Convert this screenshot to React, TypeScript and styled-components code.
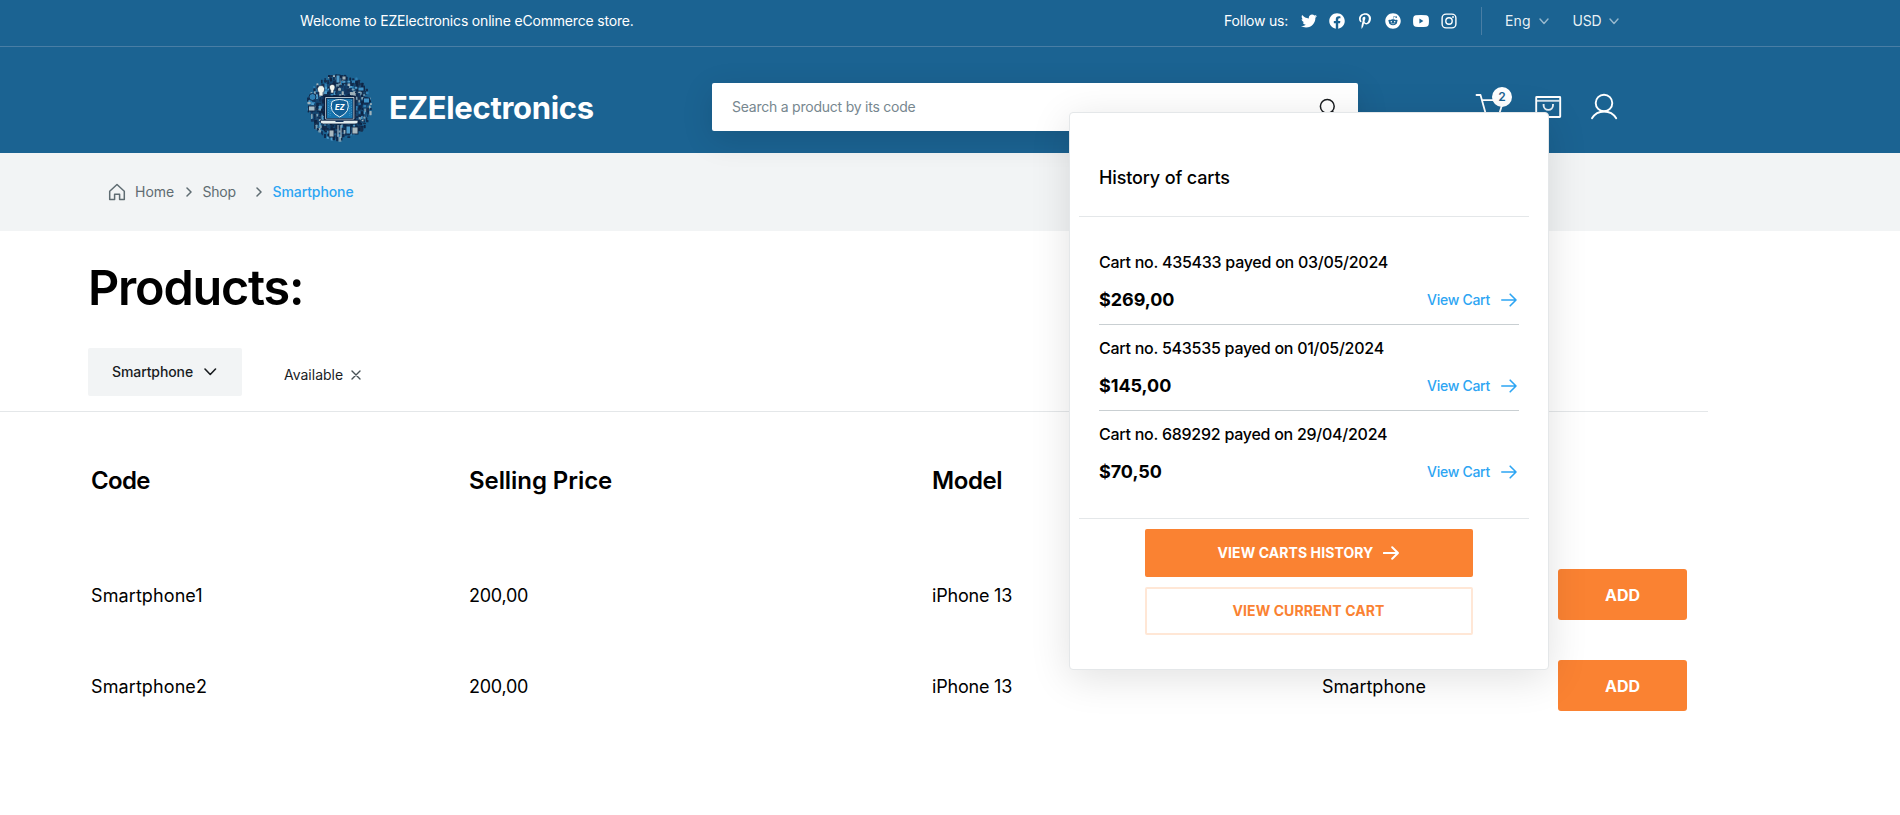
import React from 'react';
import styled, { createGlobalStyle } from 'styled-components';
import { FaTwitter, FaFacebook, FaPinterestP, FaReddit } from 'react-icons/fa';

const GlobalStyle = createGlobalStyle`
  *, *::before, *::after { box-sizing: border-box; }
  body {
    margin: 0;
    background: #fff;
    color: #000;
    font-family: Inter, 'Liberation Sans', sans-serif;
    overflow-x: hidden;
  }
  svg { display: block; flex: none; }
`;

const Page = styled.div`
  position: relative;
  width: 1900px;
  min-height: 815px;
  overflow: hidden;
`;

/* ---------- header ---------- */

const TopBar = styled.div`
  display: flex;
  align-items: center;
  justify-content: space-between;
  height: 47px;
  padding: 0 281px 4px 300px;
  background: #1b6392;
  border-bottom: 1px solid #497ea5;
  color: #fff;
  font-size: 14px;
  line-height: 20px;
  white-space: nowrap;
`;

const Welcome = styled.span`
  letter-spacing: -0.18px;
`;

const TopRight = styled.div`
  display: flex;
  align-items: center;
`;

const FollowLabel = styled.span`
  width: 77px;
  letter-spacing: -0.2px;
`;

const Socials = styled.div`
  display: flex;
  align-items: center;
  gap: 12px;
`;

const Separator = styled.span`
  width: 1px;
  height: 28px;
  margin: 0 23px 0 24px;
  background: #497ea5;
`;

const Picker = styled.div<{ $width: number; $gapLeft?: number; $spacing?: number }>`
  display: flex;
  align-items: center;
  justify-content: space-between;
  width: ${(p) => p.$width}px;
  margin-left: ${(p) => p.$gapLeft ?? 0}px;
  letter-spacing: ${(p) => p.$spacing ?? 0}px;
  color: rgba(255, 255, 255, 0.92);
`;

const MainBar = styled.header`
  display: flex;
  align-items: center;
  height: 106px;
  padding: 14px 280px 0 305px;
  background: #1b6392;
`;

const Brand = styled.div`
  display: flex;
  align-items: center;
  gap: 14px;
  width: 407px;
`;

const BrandName = styled.span`
  padding-top: 2px;
  color: #fff;
  font-size: 31px;
  font-weight: 700;
  line-height: 40px;
  letter-spacing: -0.32px;
`;

const SearchBox = styled.div`
  display: flex;
  align-items: center;
  justify-content: space-between;
  width: 646px;
  height: 48px;
  padding: 0 20px;
  border-radius: 2px;
  background: #fff;
  box-shadow: 0 8px 32px rgba(0, 0, 0, 0.12);
  color: #77878f;
  font-size: 14px;
  line-height: 20px;
  letter-spacing: -0.23px;
`;

const Actions = styled.nav`
  display: flex;
  align-items: center;
  margin-left: auto;
`;

const ActionItem = styled.div<{ $gapLeft?: number }>`
  position: relative;
  margin-left: ${(p) => p.$gapLeft ?? 0}px;
`;

const Badge = styled.span`
  position: absolute;
  top: -4px;
  left: 18px;
  width: 20px;
  height: 20px;
  border-radius: 50%;
  background: #fff;
  color: #1b6392;
  font-size: 12px;
  font-weight: 600;
  line-height: 20px;
  text-align: center;
`;

/* ---------- breadcrumb ---------- */

const Breadcrumb = styled.nav`
  display: flex;
  align-items: center;
  height: 78px;
  padding-left: 108px;
  background: #f2f4f5;
  font-size: 14px;
  line-height: 20px;
`;

const HomeIconBox = styled.span`
  width: 27px;
`;

const Crumb = styled.span<{ $width?: number; $spacing: number; $active?: boolean }>`
  width: ${(p) => (p.$width ? `${p.$width}px` : 'auto')};
  letter-spacing: ${(p) => p.$spacing}px;
  color: ${(p) => (p.$active ? '#2da5f3' : '#5f6c72')};
  font-weight: ${(p) => (p.$active ? 500 : 400)};
`;

const CrumbArrow = styled.span`
  width: 17px;
`;

/* ---------- products ---------- */

const Title = styled.h1`
  margin: 0;
  padding: 27px 0 0 88px;
  font-size: 48.5px;
  font-weight: 600;
  line-height: 60px;
  letter-spacing: -1.2px;
`;

const Filters = styled.div`
  display: flex;
  align-items: center;
  width: 1708px;
  height: 94px;
  padding: 30px 0 15px 88px;
  border-bottom: 1px solid #e4e7e9;
  color: #191c1f;
  font-size: 14px;
  line-height: 20px;
`;

const CategorySelect = styled.div`
  display: flex;
  align-items: center;
  gap: 11px;
  width: 154px;
  height: 48px;
  padding-left: 24px;
  border-radius: 2px;
  background: #f2f4f5;
  font-weight: 500;
  letter-spacing: -0.1px;
`;

const FilterTag = styled.div`
  display: flex;
  align-items: center;
  gap: 8px;
  margin-left: 42px;
  padding-top: 5px;
`;

const Table = styled.div`
  padding-left: 91px;
`;

const Row = styled.div`
  display: grid;
  grid-template-columns: 378px 463px 390px 236px 129px;
  align-items: center;
  height: 91px;
`;

const HeadRow = styled(Row)`
  height: 137px;
`;

const HeadCell = styled.span<{ $spacing?: number }>`
  padding-top: 1px;
  font-size: 24px;
  font-weight: 600;
  line-height: 32px;
  letter-spacing: ${(p) => p.$spacing ?? 0}px;
`;

const Cell = styled.span<{ $spacing?: number }>`
  padding-top: 2px;
  font-size: 18px;
  line-height: 24px;
  letter-spacing: ${(p) => p.$spacing ?? 0}px;
`;

const AddButton = styled.button`
  height: 51px;
  padding: 0;
  border: 0;
  border-radius: 3px;
  background: #fa8232;
  color: #fff;
  font: 700 16px/24px Inter, sans-serif;
`;

/* ---------- cart history popup ---------- */

const Popup = styled.section`
  position: absolute;
  top: 112px;
  left: 1069px;
  width: 480px;
  height: 558px;
  border: 1px solid #e4e7e9;
  border-radius: 4px;
  background: #fff;
  box-shadow: 0 8px 40px rgba(0, 0, 0, 0.12);
`;

const PopupTitle = styled.h2`
  width: 450px;
  height: 104px;
  margin: 0 0 0 9px;
  padding: 53px 0 0 20px;
  border-bottom: 1px solid #e4e7e9;
  font-size: 18px;
  font-weight: 500;
  line-height: 24px;
  letter-spacing: -0.14px;
`;

const CartList = styled.ul`
  width: 420px;
  margin: 22px 0 0 29px;
  padding: 0;
  list-style: none;
`;

const CartEntry = styled.li`
  display: flex;
  flex-direction: column;
  gap: 14px;
  height: 86px;
  padding-top: 10.5px;
  border-bottom: 1px solid #c9cfd2;

  &:last-child {
    border-bottom-color: transparent;
  }
`;

const CartLabel = styled.span`
  font-size: 16px;
  font-weight: 500;
  line-height: 24px;
  letter-spacing: -0.26px;
`;

const CartFooter = styled.div`
  display: flex;
  align-items: center;
  justify-content: space-between;
`;

const CartTotal = styled.span`
  font-size: 18px;
  font-weight: 700;
  line-height: 24px;
  letter-spacing: -0.05px;
`;

const CartLink = styled.a`
  display: flex;
  align-items: center;
  gap: 11px;
  padding-right: 2px;
  color: #2da5f3;
  font-size: 14px;
  font-weight: 500;
  line-height: 20px;
  letter-spacing: -0.27px;
`;

const PopupActions = styled.div`
  display: flex;
  flex-direction: column;
  gap: 10px;
  width: 450px;
  margin: 21px 0 0 9px;
  padding: 10px 56px 0 66px;
  border-top: 1px solid #e4e7e9;
`;

const PopupButton = styled.button<{ $outline?: boolean }>`
  display: flex;
  align-items: center;
  justify-content: center;
  gap: 10px;
  height: 48px;
  padding: 0 1px 0 0;
  border: 2px solid ${(p) => (p.$outline ? '#ffe7d6' : '#fa8232')};
  border-radius: 2px;
  background: ${(p) => (p.$outline ? '#fff' : '#fa8232')};
  color: ${(p) => (p.$outline ? '#fa8232' : '#fff')};
  font: 700 14px/20px Inter, sans-serif;
  letter-spacing: 0.08px;
`;

/* ---------- icons ---------- */

function Chevron({ width = 8, height = 5, stroke = 1.4, opacity = 1 }) {
  return (
    <svg width={width + 2} height={height + 2} fill="none" stroke="currentColor" strokeWidth={stroke} opacity={opacity}>
      <path d={`M1 1l${width / 2} ${height - 0.5}L${width + 1} 1`} strokeLinecap="round" strokeLinejoin="round" />
    </svg>
  );
}

function RightChevron() {
  return (
    <svg width="6" height="10" fill="none" stroke="#5f6c72" strokeWidth="1.5" strokeLinecap="round" strokeLinejoin="round">
      <path d="M1 1l4 4-4 4" />
    </svg>
  );
}

function Arrow({ stroke = 1.6 }) {
  return (
    <svg width="16" height="14" fill="none" stroke="currentColor" strokeWidth={stroke} strokeLinecap="round" strokeLinejoin="round">
      <path d="M.8 7h14.2M9.2 1.200L15 7l-5.800 5.800" />
    </svg>
  );
}

function YoutubeIcon() {
  return (
    <svg width="16" height="16" viewBox="0 0 16 16">
      <path
        fill="currentColor"
        fillRule="evenodd"
        d="M2.600 2.200Q8 1.600 13.400 2.200Q15.400 2.400 15.700 4.400Q16.200 8 15.700 11.600Q15.400 13.600 13.400 13.800Q8 14.400 2.600 13.800Q.6 13.600.3 11.600Q-.2 8 .3 4.400Q.6 2.400 2.600 2.200ZM6.400 5.600V10.400L10.400 8Z"
      />
    </svg>
  );
}

function InstagramIcon() {
  return (
    <svg width="16" height="16" viewBox="0 0 16 16" fill="none" stroke="currentColor" strokeWidth="1.400">
      <rect x="1.100" y="1.100" width="13.800" height="13.800" rx="4" />
      <circle cx="8" cy="8" r="3.200" />
      <circle cx="12" cy="4" r=".95" fill="currentColor" stroke="none" />
    </svg>
  );
}

function SearchIcon() {
  return (
    <svg width="20" height="20" fill="none" stroke="#191c1f" strokeWidth="1.500" strokeLinecap="round">
      <circle cx="9.300" cy="9.300" r="6.900" />
      <path d="M14.200 14.200L18 18" />
    </svg>
  );
}

function CartIcon() {
  return (
    <svg width="32" height="32" fill="none" stroke="#fff" strokeWidth="1.800" strokeLinecap="round" strokeLinejoin="round">
      <path d="M2.500 4H6.500L11.500 22H25.500L29.500 9.200H8" />
      <circle cx="12.500" cy="27" r="1.500" />
      <circle cx="24.500" cy="27" r="1.500" />
    </svg>
  );
}

function BagIcon() {
  return (
    <svg width="32" height="32" fill="none" stroke="#fff" strokeWidth="1.900">
      <rect x="4.200" y="6" width="24" height="20" rx=".5" />
      <path d="M5 9.800H27.500" opacity=".8" />
      <path d="M11.600 13v1.200a4.700 4.700 0 0 0 9.400 0V13" opacity=".9" />
    </svg>
  );
}

function UserIcon() {
  return (
    <svg width="32" height="32" fill="none" stroke="#fff" strokeWidth="1.900" strokeLinecap="round">
      <circle cx="16" cy="12" r="8.300" />
      <path d="M4 27.300A14.100 14.100 0 0 1 28.200 27.300" />
    </svg>
  );
}

function HouseIcon() {
  return (
    <svg width="18" height="18" fill="none" stroke="#5f6c72" strokeWidth="1.500" strokeLinejoin="round">
      <path d="M1.700 16.500V8.200L9 1.500L16.300 8.200V16.500H11.600V11.300H6.600V16.500Z" />
    </svg>
  );
}

function CloseIcon() {
  return (
    <svg width="10" height="10" fill="none" stroke="#475156" strokeWidth="1.400" strokeLinecap="round">
      <path d="M1 1l8 8M9 1L1 9" />
    </svg>
  );
}

type Part = [number, number, number, number, string];

/* Small gadgets packed in a disc around the laptop. */
const gadgets: Part[] = (() => {
  const shades = ['#102c50', '#0f2748', '#14365f', '#4f9ccb', '#7d9fb2', '#17304f', '#9fb2bb', '#0e2444', '#2f7fb3', '#122b4c'];
  const parts: Part[] = [];
  let seed = 29;
  const next = () => {
    seed = (seed * 1103515245 + 12345) % 2147483648;
    return seed / 2147483648;
  };
  for (let y = 2; y < 70; y += 2.800) {
    for (let x = 2; x < 68; x += 2.800) {
      const px = x + next() * 1.500;
      const py = y + next() * 1.500;
      const w = 1.200 + next() * 1.900;
      const h = 1.400 + next() * 3.600;
      const shade = shades[Math.floor(next() * shades.length)];
      const inDisc = Math.hypot(px + w / 2 - 34.500, py + h / 2 - 35.500) < 32.500;
      if (inDisc && next() > 0.080) parts.push([px, py, w, h, shade]);
    }
  }
  return parts;
})();

function Logo() {
  return (
    <svg width="70" height="70" viewBox="0 0 70 70">
      <circle cx="34.500" cy="35.500" r="28" fill="#12335a" opacity=".6" />
      {gadgets.map(([x, y, w, h, fill], i) => (
        <rect key={i} x={x} y={y} width={w} height={h} rx=".4" fill={fill} />
      ))}
      <g stroke="#0e2444" strokeWidth=".9">
        <rect x="31" y="3" width="4" height="8" fill="#4f9ccb" />
        <rect x="37" y="4" width="4" height="4" fill="#9fb2bb" />
        <rect x="53" y="15" width="6" height="4" fill="#3f93c8" />
        <rect x="58.500" y="26" width="6" height="5" fill="#3f93c8" />
        <rect x="3.500" y="34" width="6.500" height="5" fill="#a9bec8" />
        <rect x="41" y="54" width="4.500" height="8" fill="#4f9ccb" />
        <rect x="47" y="55" width="6" height="7" fill="#a9b9c0" />
        <rect x="24" y="58" width="5" height="7" fill="#a9b9c0" />
        <circle cx="7.500" cy="25" r="3.500" fill="#2f7fb3" />
        <path d="M33 53V65M36 53V66" stroke="#c9d5da" />
      </g>
      <g fill="#f1f5ee" stroke="#0e2444" strokeWidth=".6">
        <path d="M12.500 18a3.600 3.600 0 1 1 7 0q-.3 1.600-1.500 2.600V24h-4V20.600q-1.200-1-1.500-2.600Z" />
        <path d="M24.500 16a2.800 2.800 0 1 1 5.400 0q-.3 1.400-1.200 2.200V21h-3V18.200q-.9-.8-1.200-2.200Z" />
      </g>
      <rect x="18.800" y="23.500" width="32" height="25" rx="1.600" fill="#0b1e3e" />
      <rect x="20.300" y="25" width="29" height="22.500" rx=".8" fill="#d8e6ec" />
      <rect x="21.100" y="25.800" width="27.400" height="21" fill="#0b1e3e" />
      <rect x="22" y="26.700" width="25.600" height="19.500" fill="#1673ad" />
      <path d="M23.500 28V45M25.200 29V44M44.700 29V44M46.400 28V45" stroke="#69b5de" strokeWidth=".7" strokeDasharray=".8 1.600" />
      <path d="M27 29.500Q34.500 25.500 42.500 29.500Q46 40 34.700 45Q23.500 40 27 29.500Z" fill="#125f96" stroke="#e9f3f7" strokeWidth="1" />
      <text x="34.800" y="37.800" textAnchor="middle" fontFamily="Inter, sans-serif" fontSize="7.500" fontWeight="800" fontStyle="italic" fill="#fff">
        EZ
      </text>
      <path d="M15.500 48.300H53V50.500Q52 52 50 52H18.500Q16.500 52 15.500 50.500Z" fill="#e4edf0" stroke="#0b1e3e" strokeWidth=".8" />
      <path d="M30.500 48.600H38.500V50H30.500Z" fill="#17365f" />
    </svg>
  );
}

/* ---------- data ---------- */

const products = [
  { code: 'Smartphone1', price: '200,00', model: 'iPhone 13', category: 'Smartphone' },
  { code: 'Smartphone2', price: '200,00', model: 'iPhone 13', category: 'Smartphone' },
];

const carts = [
  { id: '435433', date: '03/05/2024', total: '$269,00' },
  { id: '543535', date: '01/05/2024', total: '$145,00' },
  { id: '689292', date: '29/04/2024', total: '$70,50' },
];

export default function App() {
  return (
    <Page>
      <GlobalStyle />
      <TopBar>
        <Welcome>Welcome to EZElectronics online eCommerce store.</Welcome>
        <TopRight>
          <FollowLabel>Follow us:</FollowLabel>
          <Socials>
            <FaTwitter size={16} />
            <FaFacebook size={16} />
            <FaPinterestP size={16} />
            <FaReddit size={16} />
            <YoutubeIcon />
            <InstagramIcon />
          </Socials>
          <Separator />
          <Picker $width={43.5} $spacing={0.1}>
            Eng <Chevron opacity={0.6} />
          </Picker>
          <Picker $width={46.5} $gapLeft={24} $spacing={-0.2}>
            USD <Chevron opacity={0.6} />
          </Picker>
        </TopRight>
      </TopBar>

      <MainBar>
        <Brand>
          <Logo />
          <BrandName>EZElectronics</BrandName>
        </Brand>
        <SearchBox>
          Search a product by its code
          <SearchIcon />
        </SearchBox>
        <Actions>
          <ActionItem>
            <CartIcon />
            <Badge>2</Badge>
          </ActionItem>
          <ActionItem $gapLeft={26}>
            <BagIcon />
          </ActionItem>
          <ActionItem $gapLeft={24}>
            <UserIcon />
          </ActionItem>
        </Actions>
      </MainBar>

      <Breadcrumb>
        <HomeIconBox>
          <HouseIcon />
        </HomeIconBox>
        <Crumb $width={50.5} $spacing={0}>
          Home
        </Crumb>
        <CrumbArrow>
          <RightChevron />
        </CrumbArrow>
        <Crumb $width={53} $spacing={-0.2}>
          Shop
        </Crumb>
        <CrumbArrow>
          <RightChevron />
        </CrumbArrow>
        <Crumb $active $spacing={-0.1}>
          Smartphone
        </Crumb>
      </Breadcrumb>

      <Title>Products:</Title>
      <Filters>
        <CategorySelect>
          Smartphone
          <Chevron width={10.5} height={6} stroke={1.6} />
        </CategorySelect>
        <FilterTag>
          Available
          <CloseIcon />
        </FilterTag>
      </Filters>

      <Table>
        <HeadRow>
          <HeadCell $spacing={-0.7}>Code</HeadCell>
          <HeadCell $spacing={-0.07}>Selling Price</HeadCell>
          <HeadCell $spacing={-0.4}>Model</HeadCell>
          <HeadCell>Category</HeadCell>
        </HeadRow>
        {products.map((p) => (
          <Row key={p.code}>
            <Cell $spacing={0.1}>{p.code}</Cell>
            <Cell $spacing={-0.26}>{p.price}</Cell>
            <Cell $spacing={-0.2}>{p.model}</Cell>
            <Cell>{p.category}</Cell>
            <AddButton>ADD</AddButton>
          </Row>
        ))}
      </Table>

      <Popup>
        <PopupTitle>History of carts</PopupTitle>
        <CartList>
          {carts.map((c) => (
            <CartEntry key={c.id}>
              <CartLabel>
                Cart no. {c.id} payed on {c.date}
              </CartLabel>
              <CartFooter>
                <CartTotal>{c.total}</CartTotal>
                <CartLink>
                  View Cart <Arrow />
                </CartLink>
              </CartFooter>
            </CartEntry>
          ))}
        </CartList>
        <PopupActions>
          <PopupButton>
            VIEW CARTS HISTORY <Arrow stroke={2} />
          </PopupButton>
          <PopupButton $outline>VIEW CURRENT CART</PopupButton>
        </PopupActions>
      </Popup>
    </Page>
  );
}
